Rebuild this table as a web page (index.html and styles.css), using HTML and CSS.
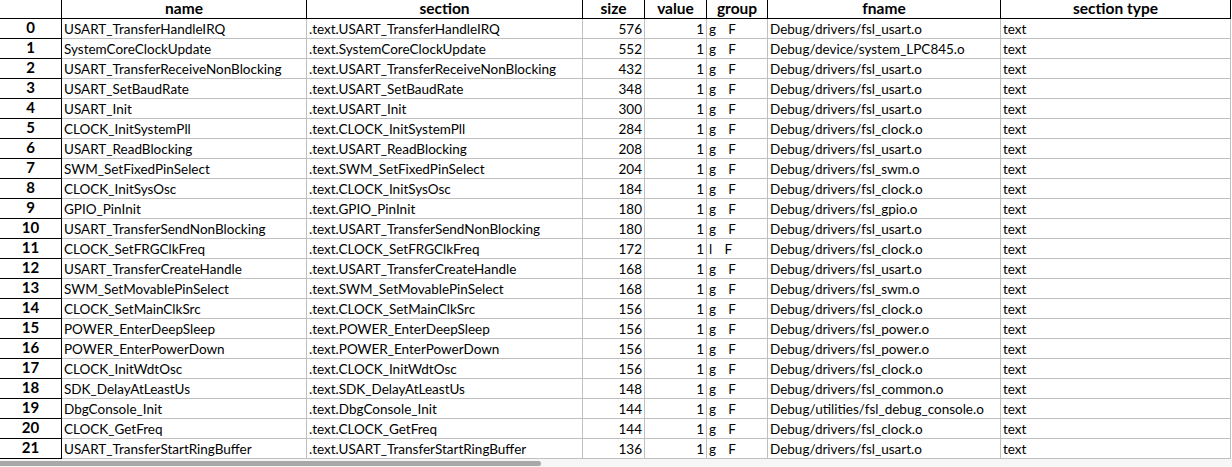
FILE: index.html
```html
<!DOCTYPE html>
<html>
<head>
<meta charset="utf-8">
<link rel="stylesheet" href="styles.css">
</head>
<body>
<div class="sheet">
  <div class="row head">
    <div class="c idx"></div>
    <div class="c">name</div>
    <div class="c">section</div>
    <div class="c">size</div>
    <div class="c">value</div>
    <div class="c">group</div>
    <div class="c">fname</div>
    <div class="c">section type</div>
  </div>
  <div id="rows"></div>
  <div class="hscroll"><div class="thumb"></div></div>
</div>
<script>
const data = [
["USART_TransferHandleIRQ",576,"g","Debug/drivers/fsl_usart.o"],
["SystemCoreClockUpdate",552,"g","Debug/device/system_LPC845.o"],
["USART_TransferReceiveNonBlocking",432,"g","Debug/drivers/fsl_usart.o"],
["USART_SetBaudRate",348,"g","Debug/drivers/fsl_usart.o"],
["USART_Init",300,"g","Debug/drivers/fsl_usart.o"],
["CLOCK_InitSystemPll",284,"g","Debug/drivers/fsl_clock.o"],
["USART_ReadBlocking",208,"g","Debug/drivers/fsl_usart.o"],
["SWM_SetFixedPinSelect",204,"g","Debug/drivers/fsl_swm.o"],
["CLOCK_InitSysOsc",184,"g","Debug/drivers/fsl_clock.o"],
["GPIO_PinInit",180,"g","Debug/drivers/fsl_gpio.o"],
["USART_TransferSendNonBlocking",180,"g","Debug/drivers/fsl_usart.o"],
["CLOCK_SetFRGClkFreq",172,"l","Debug/drivers/fsl_clock.o"],
["USART_TransferCreateHandle",168,"g","Debug/drivers/fsl_usart.o"],
["SWM_SetMovablePinSelect",168,"g","Debug/drivers/fsl_swm.o"],
["CLOCK_SetMainClkSrc",156,"g","Debug/drivers/fsl_clock.o"],
["POWER_EnterDeepSleep",156,"g","Debug/drivers/fsl_power.o"],
["POWER_EnterPowerDown",156,"g","Debug/drivers/fsl_power.o"],
["CLOCK_InitWdtOsc",156,"g","Debug/drivers/fsl_clock.o"],
["SDK_DelayAtLeastUs",148,"g","Debug/drivers/fsl_common.o"],
["DbgConsole_Init",144,"g","Debug/utilities/fsl_debug_console.o"],
["CLOCK_GetFreq",144,"g","Debug/drivers/fsl_clock.o"],
["USART_TransferStartRingBuffer",136,"g","Debug/drivers/fsl_usart.o"]
];
const host = document.getElementById('rows');
data.forEach((d,i)=>{
  const r = document.createElement('div');
  r.className = 'row';
  r.innerHTML =
    '<div class="c idx">'+i+'</div>'+
    '<div class="c">'+d[0]+'</div>'+
    '<div class="c">.text.'+d[0]+'</div>'+
    '<div class="c num">'+d[1]+'</div>'+
    '<div class="c num">1</div>'+
    '<div class="c grp">'+d[2]+'    F</div>'+
    '<div class="c">'+d[3]+'</div>'+
    '<div class="c">text</div>';
  host.appendChild(r);
});
</script>
</body>
</html>
```
FILE: styles.css
```css
html, body {
  margin: 0;
  padding: 0;
  background: #fff;
}
body {
  font-family: Lato, "Liberation Sans", sans-serif;
  font-size: 13.5px;
  color: #000;
  width: 1232px;
  height: 467px;
  overflow: hidden;
}
.sheet {
  display: flex;
  flex-direction: column;
}
.row {
  display: grid;
  grid-template-columns: 62px 245px 276px 62px 62px 61px 233px 230px;
  height: 20px;
}
.c {
  box-sizing: border-box;
  border-right: 1px solid #c0c0c0;
  border-bottom: 1px solid #c0c0c0;
  padding: 1px 2px 0 2px;
  line-height: 18px;
  white-space: pre;
  overflow: hidden;
}
.row .idx {
  border-right-color: #000;
  border-bottom-color: #000;
  text-align: center;
  font-weight: 700;
  font-size: 15px;
  padding-top: 0;
  line-height: 17px;
}
.head {
  height: 19px;
}
.head .c {
  border-right-color: #000;
  border-bottom-color: #000;
  text-align: center;
  font-weight: 700;
  font-size: 15.5px;
  line-height: 16px;
  padding-top: 0;
  overflow: visible;
}
.num {
  text-align: right;
}
.grp {
  padding-left: 2px;
  word-spacing: -0.4px;
}
.hscroll {
  height: 8px;
  background: #f6f6f6;
}
.thumb {
  width: 541px;
  height: 5px;
  margin-top: 2px;
  background: #a8a8a8;
  border-radius: 0 3px 3px 0;
}
```
